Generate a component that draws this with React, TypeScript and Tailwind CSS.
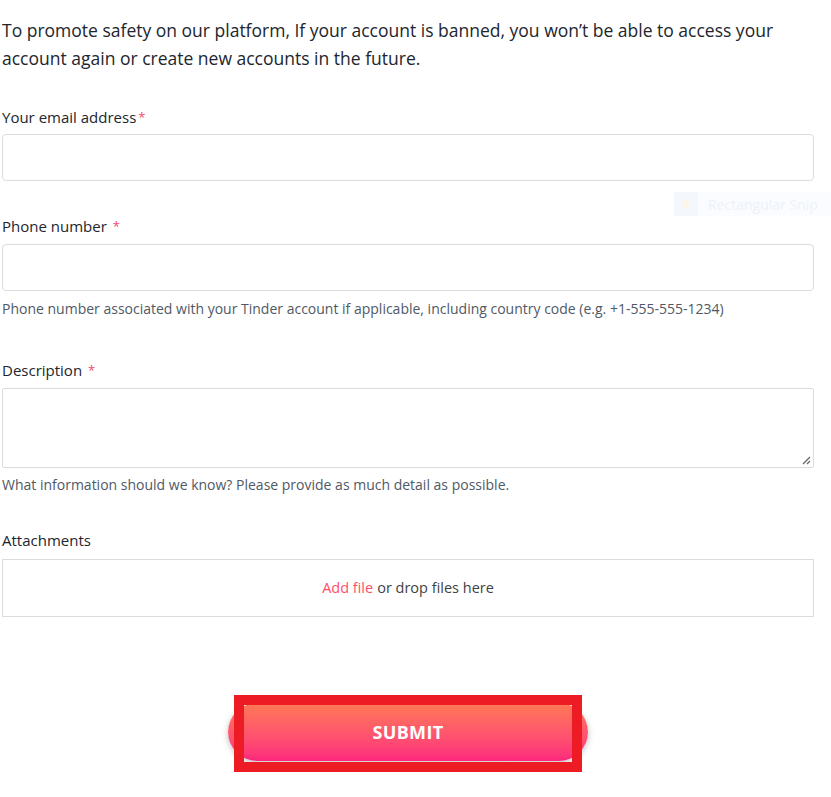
import React from 'react';

function Label({ text, required, gap }: { text: string; required?: boolean; gap?: boolean }) {
  return (
    <div className="text-[15px] leading-5 text-[#21262e]">
      {text}
      {required && (
        <span className={`text-[#ef4a6b] text-[13px] align-top ${gap ? 'ml-[6px]' : 'ml-[2px]'}`}>*</span>
      )}
    </div>
  );
}

export default function App() {
  return (
    <div
      className="relative w-[831px] h-[797px] bg-white overflow-hidden"
      style={{ fontFamily: '"Open Sans", "Liberation Sans", sans-serif' }}
    >
      <div className="pl-[2px] w-[814px]">
        <p className="pt-[16px] text-[17.5px] leading-[28px] text-[#21262e]">
          To promote safety on our platform, If your account is banned, you won’t be able to access your account again
          or create new accounts in the future.
        </p>

        {/* email */}
        <div className="mt-[35px]">
          <Label text="Your email address" required />
          <div className="mt-[7px] h-[47px] rounded-[4px] border border-[#dcdcdc]" />
        </div>

        {/* phone */}
        <div className="mt-[35px]">
          <Label text="Phone number" required gap />
          <div className="mt-[8px] h-[47px] rounded-[4px] border border-[#dcdcdc]" />
          <div className="mt-[9px] text-[14px] leading-[18px] text-[#505965]">
            Phone number associated with your Tinder account if applicable, including country code (e.g. +1-555-555-1234)
          </div>
        </div>

        {/* description */}
        <div className="mt-[42px]">
          <Label text="Description" required gap />
          <div className="relative mt-[8px] h-[80px] rounded-[2px] border border-[#dcdcdc]">
            <svg className="absolute right-[2px] bottom-[2px]" width="10" height="10" viewBox="0 0 10 10">
              <path d="M9 2L2 9M9 6L6 9" stroke="#666" strokeWidth="1.3" />
            </svg>
          </div>
          <div className="mt-[8px] text-[14px] leading-[18px] text-[#505965]">
            What information should we know? Please provide as much detail as possible.
          </div>
        </div>

        {/* attachments */}
        <div className="mt-[36px]">
          <Label text="Attachments" />
          <div className="mt-[9px] h-[58px] border border-[#dcdcdc] flex items-center justify-center text-[14.5px]">
            <span className="text-[#fd5068]">Add file</span>
            <span className="ml-[4px] text-[#424242]">or drop files here</span>
          </div>
        </div>
      </div>

      {/* submit */}
      <div className="mt-[86px] flex justify-center pr-[15px]">
        <div className="relative">
          <button className="w-[360px] h-[58px] rounded-full bg-gradient-to-b from-[#ff7854] to-[#fd267d] text-white font-bold text-[18px] tracking-[0.3px] shadow-[0_2px_6px_rgba(0,0,0,0.25)]">
            SUBMIT
          </button>
          <div className="absolute left-[6px] right-[6px] top-[-8px] bottom-[-11px] border-[10px] border-[#ed1c24]" />
        </div>
      </div>

      {/* faint snipping tool ghost */}
      <div className="absolute left-[674px] top-[192px] w-[157px] h-[24px] bg-[#fafcff] flex items-center">
        <div className="w-[24px] h-[24px] bg-[#f4f8fd] flex items-center justify-center">
          <div className="w-[8px] h-[8px] rounded-full bg-[#fbf5ea]" />
        </div>
        <span className="ml-[10px] text-[14px] text-[#eef2f8]">Rectangular Snip</span>
      </div>
    </div>
  );
}
